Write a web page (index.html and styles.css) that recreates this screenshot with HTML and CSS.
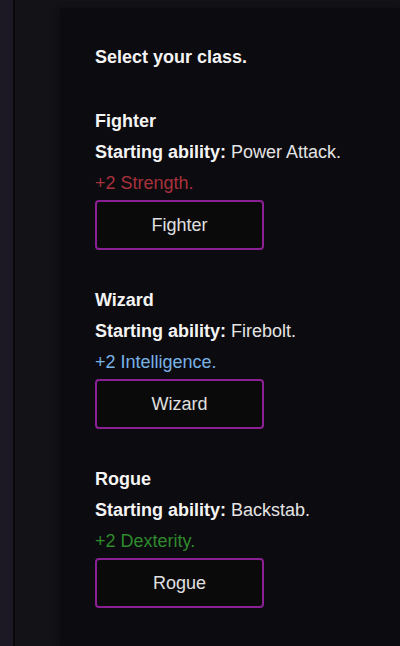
FILE: index.html
```html
<!DOCTYPE html>
<html>
<head>
<meta charset="utf-8">
<link rel="stylesheet" href="styles.css">
</head>
<body>
<div class="app">
  <aside class="sidebar"></aside>
  <div class="gutter"></div>
  <main class="panel">
    <div class="title">Select your class.</div>
    <section class="cls">
      <div class="name">Fighter</div>
      <div class="line"><b>Starting ability:</b> Power Attack.</div>
      <div class="line bonus red">+2 Strength.</div>
      <button class="pick">Fighter</button>
    </section>
    <section class="cls">
      <div class="name">Wizard</div>
      <div class="line"><b>Starting ability:</b> Firebolt.</div>
      <div class="line bonus blue">+2 Intelligence.</div>
      <button class="pick">Wizard</button>
    </section>
    <section class="cls">
      <div class="name">Rogue</div>
      <div class="line"><b>Starting ability:</b> Backstab.</div>
      <div class="line bonus green">+2 Dexterity.</div>
      <button class="pick">Rogue</button>
    </section>
  </main>
</div>
</body>
</html>
```
FILE: styles.css
```css
html, body {
  margin: 0;
  padding: 0;
  height: 100%;
  background: #131217;
  font-family: "Liberation Sans", Arial, sans-serif;
  font-size: 18px;
  color: #e4e4e4;
}
.app {
  display: flex;
  height: 646px;
  overflow: hidden;
}
.sidebar {
  width: 13px;
  flex: none;
  background: #1d1924;
  border-right: 2px solid #09080b;
}
.gutter {
  width: 45px;
  flex: none;
  background: #131217;
}
.panel {
  flex: 1;
  margin-top: 8px;
  background: #0c0b0f;
  padding: 33px 0 0 35px;
  box-shadow: -3px 0 6px rgba(0,0,0,0.25);
}
.title {
  font-weight: bold;
  color: #f4f4f4;
  line-height: 32px;
  margin-bottom: 32px;
}
.cls {
  margin-bottom: 34px;
}
.name {
  font-weight: bold;
  color: #f4f4f4;
  line-height: 32px;
}
.line {
  line-height: 31px;
}
.line b {
  color: #f4f4f4;
}
.red { color: #a8323c; }
.blue { color: #79b2e6; }
.green { color: #2e8a2c; }
.pick {
  display: block;
  margin-top: 1px;
  width: 169px;
  height: 50px;
  background: #0a0a0b;
  border: 2px solid #8b1f94;
  border-radius: 4px;
  color: #e0e0e0;
  font-family: "Liberation Sans", Arial, sans-serif;
  font-size: 18px;
  padding: 0;
}
```
